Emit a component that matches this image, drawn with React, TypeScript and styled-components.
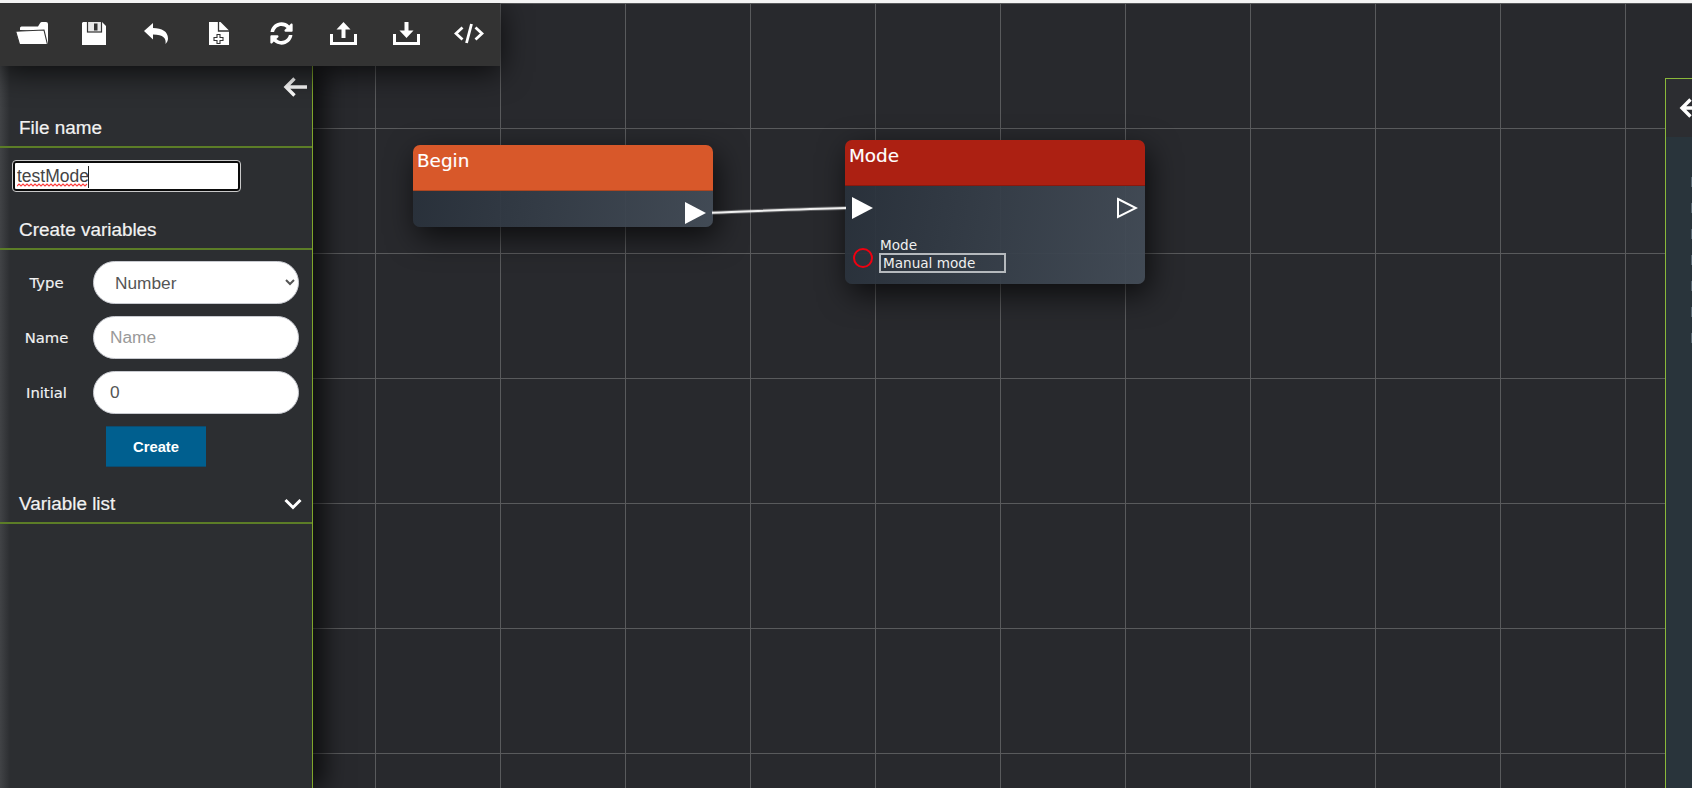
import React from "react";
import styled, { createGlobalStyle } from "styled-components";
import { FaSyncAlt } from "react-icons/fa";

const GlobalStyle = createGlobalStyle`
  html, body {
    margin: 0;
    padding: 0;
    height: 100%;
    overflow: hidden;
    background: #f4f4f4;
    font-family: "Liberation Sans", Arial, sans-serif;
  }
`;

const Page = styled.div`
  height: 788px;
  padding-top: 3px;
  box-sizing: border-box;
`;

const Workspace = styled.main`
  position: relative;
  height: 785px;
  display: flex;
  justify-content: space-between;
  overflow: hidden;
  background-color: #28292d;
  background-image: linear-gradient(to right, #595a5c 1px, transparent 1px),
    linear-gradient(to bottom, #595a5c 1px, transparent 1px);
  background-size: 125px 125px;
`;

const LeftColumn = styled.div`
  position: relative;
  z-index: 2;
  width: 500px;
  display: flex;
  flex-direction: column;
`;

const Toolbar = styled.div`
  position: relative;
  z-index: 1;
  height: 63px;
  flex: none;
  display: grid;
  grid-template-columns: repeat(8, 1fr);
  align-items: center;
  justify-items: center;
  padding-bottom: 2px;
  box-sizing: border-box;
  background: #333333;
  box-shadow: 0 6px 30px rgba(0, 0, 0, 0.75);
  color: #fff;
`;

const ToolIcon = styled.svg`
  display: block;
  fill: #fff;
`;

const SyncIcon = styled(FaSyncAlt)`
  display: block;
  width: 23px;
  height: 23px;
`;

const Sidebar = styled.aside`
  flex: 1;
  width: 313px;
  box-sizing: border-box;
  border-right: 1px solid #7fa62b;
  background: linear-gradient(to right, #414346 0, #2c2e31 10px);
  box-shadow: 12px 0 22px rgba(0, 0, 0, 0.65);
  color: #f0f0f0;
`;

const CollapseRow = styled.div`
  height: 41px;
  display: flex;
  align-items: center;
  justify-content: flex-end;
  padding-right: 5px;
  box-sizing: border-box;
`;

const Arrow = styled.svg`
  display: block;
  fill: none;
  stroke: #fff;
  stroke-width: 3.4;
`;

const SectionHeader = styled.div`
  height: 41px;
  display: flex;
  align-items: center;
  justify-content: space-between;
  padding: 3px 10px 0 19px;
  box-sizing: border-box;
  border-bottom: 2px solid #5c7d27;
  font-size: 18.9px;
  -webkit-text-stroke: 0.2px #f2f2f2;
  color: #f2f2f2;
`;

const FileNameField = styled.div`
  position: relative;
  width: 227px;
  height: 30px;
  margin: 13px 0 18px 13px;
`;

const FileNameInput = styled.input`
  width: 100%;
  height: 100%;
  box-sizing: border-box;
  padding: 1px 0 0 2px;
  border: 2px solid #0c0c0c;
  border-radius: 3px;
  outline: 1px solid #c9c9c9;
  background: #fff;
  font-family: "Liberation Sans", Arial, sans-serif;
  font-size: 17.5px;
  color: #444;
`;

const Squiggle = styled.svg`
  position: absolute;
  left: 4px;
  top: 22px;
  fill: none;
  stroke: #ff3b3b;
  stroke-width: 1.1;
`;

const Caret = styled.span`
  position: absolute;
  left: 75px;
  top: 5px;
  width: 1px;
  height: 22px;
  background: #222;
`;

const VariableForm = styled.div`
  display: flex;
  flex-direction: column;
  gap: 12px;
  padding-top: 11px;
`;

const FormRow = styled.label`
  display: grid;
  grid-template-columns: 93px 206px;
  align-items: center;
  height: 43px;
`;

const FormLabel = styled.span`
  text-align: center;
  font-family: "DejaVu Sans", Verdana, sans-serif;
  font-size: 14.8px;
  -webkit-text-stroke: 0.15px #f2f2f2;
  color: #f2f2f2;
`;

const pillStyles = `
  width: 100%;
  height: 43px;
  box-sizing: border-box;
  border: 1px solid #c8cad0;
  border-radius: 22px;
  background: #fff;
  font-family: "Liberation Sans", Arial, sans-serif;
  font-size: 17.3px;
  color: #555;
  outline: none;
`;

const PillSelect = styled.select`
  ${pillStyles}
  padding-left: 17px;
`;

const PillInput = styled.input`
  ${pillStyles}
  padding-left: 16px;
  &::placeholder {
    color: #999;
  }
`;

const CreateButton = styled.button`
  display: block;
  width: 100px;
  height: 41px;
  margin: 12px 0 0 106px;
  border: none;
  border-top: 1px solid #0c4c70;
  border-bottom: 1px solid #0c4c70;
  background: #005f8f;
  color: #fff;
  font-family: "Liberation Sans", Arial, sans-serif;
  font-size: 14.8px;
  font-weight: bold;
`;

const VariableHeader = styled(SectionHeader)`
  margin-top: 16px;
`;

const Chevron = styled.svg`
  display: block;
  fill: none;
  stroke: #fff;
  stroke-width: 3;
`;

const RightPanel = styled.aside`
  position: relative;
  z-index: 2;
  width: 27px;
  margin-top: 75px;
  box-sizing: border-box;
  border-left: 1px solid #8ab83a;
  border-top: 1px solid #8ab83a;
  display: flex;
  flex-direction: column;
  overflow: hidden;
`;

const RightHead = styled.div`
  height: 58px;
  flex: none;
  padding: 19px 0 0 13px;
  box-sizing: border-box;
  background: #2c2d31;
`;

const RightBody = styled.div`
  flex: 1;
  display: flex;
  flex-direction: column;
  gap: 16px;
  padding: 40px 0 0 25px;
  background: #29343b;
`;

/* first pixel column of text that runs off the window */
const ClippedLine = styled.span`
  display: block;
  width: 1px;
  height: 10px;
  background: #56656f;
`;

const WireLayer = styled.svg`
  position: absolute;
  left: 0;
  top: 0;
  z-index: 1;
  pointer-events: none;
`;

const Node = styled.section<{ $x: number; $y: number }>`
  position: absolute;
  left: ${(props) => props.$x}px;
  top: ${(props) => props.$y}px;
  width: 300px;
  border-radius: 7px;
  overflow: hidden;
  box-shadow: 4px 10px 30px rgba(0, 0, 0, 0.7);
`;

const NodeTitle = styled.header<{ $color: string }>`
  height: 46px;
  padding: 5px 0 0 4px;
  box-sizing: border-box;
  background: ${(props) => props.$color};
  border-bottom: 1px solid rgba(0, 0, 0, 0.2);
  font-family: "DejaVu Sans", Verdana, sans-serif;
  font-size: 18.4px;
  line-height: 22px;
  -webkit-text-stroke: 0.15px #fff;
  color: #fff;
`;

const NodeBody = styled.div<{ $height: number }>`
  height: ${(props) => props.$height}px;
  box-sizing: border-box;
  padding: 11px 7px 0;
  background: linear-gradient(
    100deg,
    rgba(41, 49, 59, 0.95),
    rgba(67, 76, 87, 0.95)
  );
`;

const PortRow = styled.div<{ $align: string }>`
  display: flex;
  justify-content: ${(props) => props.$align};
`;

const Port = styled.svg`
  display: block;
`;

const FieldRow = styled.div`
  display: flex;
  align-items: center;
  gap: 7px;
  margin-top: 18px;
  padding-left: 1px;
`;

const FieldPin = styled.span`
  width: 20px;
  height: 20px;
  margin-top: 5px;
  box-sizing: border-box;
  border: 2.5px solid #f00010;
  border-radius: 50%;
`;

const Field = styled.div`
  display: flex;
  flex-direction: column;
  font-family: "DejaVu Sans", Verdana, sans-serif;
  font-size: 13.6px;
  color: #f0f0f0;
`;

const FieldLabel = styled.span`
  height: 16px;
  line-height: 16px;
`;

const FieldValue = styled.span`
  width: 127px;
  height: 20px;
  margin-left: -1px;
  box-sizing: border-box;
  border: 2px solid #b5b9bd;
  padding-left: 2px;
  line-height: 16px;
`;

const FolderIcon = () => (
  <ToolIcon width="33" height="23" viewBox="0 0 33 23">
    <path d="M5 8V6q0-1.500 1.500-1.500H23L25 1.200Q25.700 0 27 0h4q2 0 2 2v20h-2L28 9Z" />
    <path d="M0.600 9.200 29 8l3.500 14.500H4.500Z" stroke="#333" strokeWidth="1.100" />
  </ToolIcon>
);

const SaveIcon = () => (
  <ToolIcon width="24" height="23" viewBox="0 0 24 23">
    <path d="M1 0H20L24 4V23H0V1Z" />
    <rect x="5.500" y="-1" width="14" height="11" fill="#e8e8e8" stroke="#333" strokeWidth="1.200" />
    <rect x="12" y="1.500" width="3.500" height="7" fill="#333" />
  </ToolIcon>
);

const ReplyIcon = () => (
  <ToolIcon width="24" height="21" viewBox="0 0 24 21">
    <path d="M0 8 9 0V5C18 5 24 8.500 24 15.500 24 17.500 23 19.500 21.500 21 22.500 15.500 19.500 11.500 9 11.500V16.500Z" />
  </ToolIcon>
);

const NewFileIcon = () => (
  <ToolIcon width="20" height="23" viewBox="0 0 20 23">
    <path d="M0 0H11.500L20 8.500V23H0Z" />
    <path d="M9.500 0V9H20" fill="none" stroke="#333" strokeWidth="1.300" />
    <path
      d="M8 12.500H11V15.500H14V18.500H11V21.500H8V18.500H5V15.500H8Z"
      fill="#fff"
      stroke="#333"
      strokeWidth="1.100"
    />
  </ToolIcon>
);

const UploadIcon = () => (
  <ToolIcon width="27" height="23" viewBox="0 0 27 23">
    <path d="M1.500 12V21.500H25.500V12" fill="none" stroke="#fff" strokeWidth="3" />
    <path d="M13.500 0 20.500 7.500H15.500V16H11.500V7.500H6.500Z" />
  </ToolIcon>
);

const DownloadIcon = () => (
  <ToolIcon width="27" height="23" viewBox="0 0 27 23">
    <path d="M1.500 12V21.500H25.500V12" fill="none" stroke="#fff" strokeWidth="3" />
    <path d="M13.500 16 20.500 8.500H15.500V0H11.500V8.500H6.500Z" />
  </ToolIcon>
);

const CodeIcon = () => (
  <ToolIcon width="30" height="21" viewBox="0 0 30 21">
    <path
      d="M8.500 4.500 2 10.500 8.500 16.500M21.500 4.500 28 10.500 21.500 16.500M17.500 1 12.500 20"
      fill="none"
      stroke="#fff"
      strokeWidth="2.800"
    />
  </ToolIcon>
);

const BackArrow = () => (
  <Arrow width="24" height="20" viewBox="0 0 24 20">
    <path d="M24 10H3M11.500 1.500 3 10 11.500 18.500" />
  </Arrow>
);

const SolidPort = () => (
  <Port width="21" height="22" viewBox="0 0 21 22">
    <path d="M0 0 21 11 0 22Z" fill="#fff" />
  </Port>
);

const OpenPort = () => (
  <Port width="21" height="22" viewBox="0 0 21 22">
    <path d="M1 2 19 11 1 20Z" fill="none" stroke="#fff" strokeWidth="2" />
  </Port>
);

const clippedLines = [0, 1, 2, 3, 4, 5, 6];

export default function App() {
  return (
    <Page>
      <GlobalStyle />
      <Workspace>
        <WireLayer width="1692" height="785">
          <path
            d="M712 209.700 C760 208 800 206 846 205"
            fill="none"
            stroke="rgba(255,255,255,0.25)"
            strokeWidth="4"
          />
          <path
            d="M712 209.700 C760 208 800 206 846 205"
            fill="none"
            stroke="#f0f0f0"
            strokeWidth="2"
          />
        </WireLayer>
        <Node $x={413} $y={142}>
          <NodeTitle $color="#d8582a">Begin</NodeTitle>
          <NodeBody $height={36}>
            <PortRow $align="flex-end">
              <SolidPort />
            </PortRow>
          </NodeBody>
        </Node>
        <Node $x={845} $y={137}>
          <NodeTitle $color="#ac2012">Mode</NodeTitle>
          <NodeBody $height={98}>
            <PortRow $align="space-between">
              <SolidPort />
              <OpenPort />
            </PortRow>
            <FieldRow>
              <FieldPin />
              <Field>
                <FieldLabel>Mode</FieldLabel>
                <FieldValue>Manual mode</FieldValue>
              </Field>
            </FieldRow>
          </NodeBody>
        </Node>
        <LeftColumn>
          <Toolbar>
            <FolderIcon />
            <SaveIcon />
            <ReplyIcon />
            <NewFileIcon />
            <SyncIcon />
            <UploadIcon />
            <DownloadIcon />
            <CodeIcon />
          </Toolbar>
          <Sidebar>
            <CollapseRow>
              <BackArrow />
            </CollapseRow>
            <SectionHeader>File name</SectionHeader>
            <FileNameField>
              <FileNameInput defaultValue="testMode" spellCheck={false} />
              <Squiggle width="72" height="4" viewBox="0 0 72 4">
                <path d="M0 3l2-2 2 2 2-2 2 2 2-2 2 2 2-2 2 2 2-2 2 2 2-2 2 2 2-2 2 2 2-2 2 2 2-2 2 2 2-2 2 2 2-2 2 2 2-2 2 2 2-2 2 2 2-2 2 2 2-2 2 2 2-2 2 2 2-2 2 2 2-2" />
              </Squiggle>
              <Caret />
            </FileNameField>
            <SectionHeader>Create variables</SectionHeader>
            <VariableForm>
              <FormRow>
                <FormLabel>Type</FormLabel>
                <PillSelect defaultValue="Number">
                  <option>Number</option>
                  <option>Text</option>
                </PillSelect>
              </FormRow>
              <FormRow>
                <FormLabel>Name</FormLabel>
                <PillInput placeholder="Name" />
              </FormRow>
              <FormRow>
                <FormLabel>Initial</FormLabel>
                <PillInput defaultValue="0" />
              </FormRow>
            </VariableForm>
            <CreateButton>Create</CreateButton>
            <VariableHeader>
              Variable list
              <Chevron width="18" height="12" viewBox="0 0 18 12">
                <path d="M1.500 2 9 9.500 16.500 2" />
              </Chevron>
            </VariableHeader>
          </Sidebar>
        </LeftColumn>
        <RightPanel>
          <RightHead>
            <BackArrow />
          </RightHead>
          <RightBody>
            {clippedLines.map((line) => (
              <ClippedLine key={line} />
            ))}
          </RightBody>
        </RightPanel>
      </Workspace>
    </Page>
  );
}
